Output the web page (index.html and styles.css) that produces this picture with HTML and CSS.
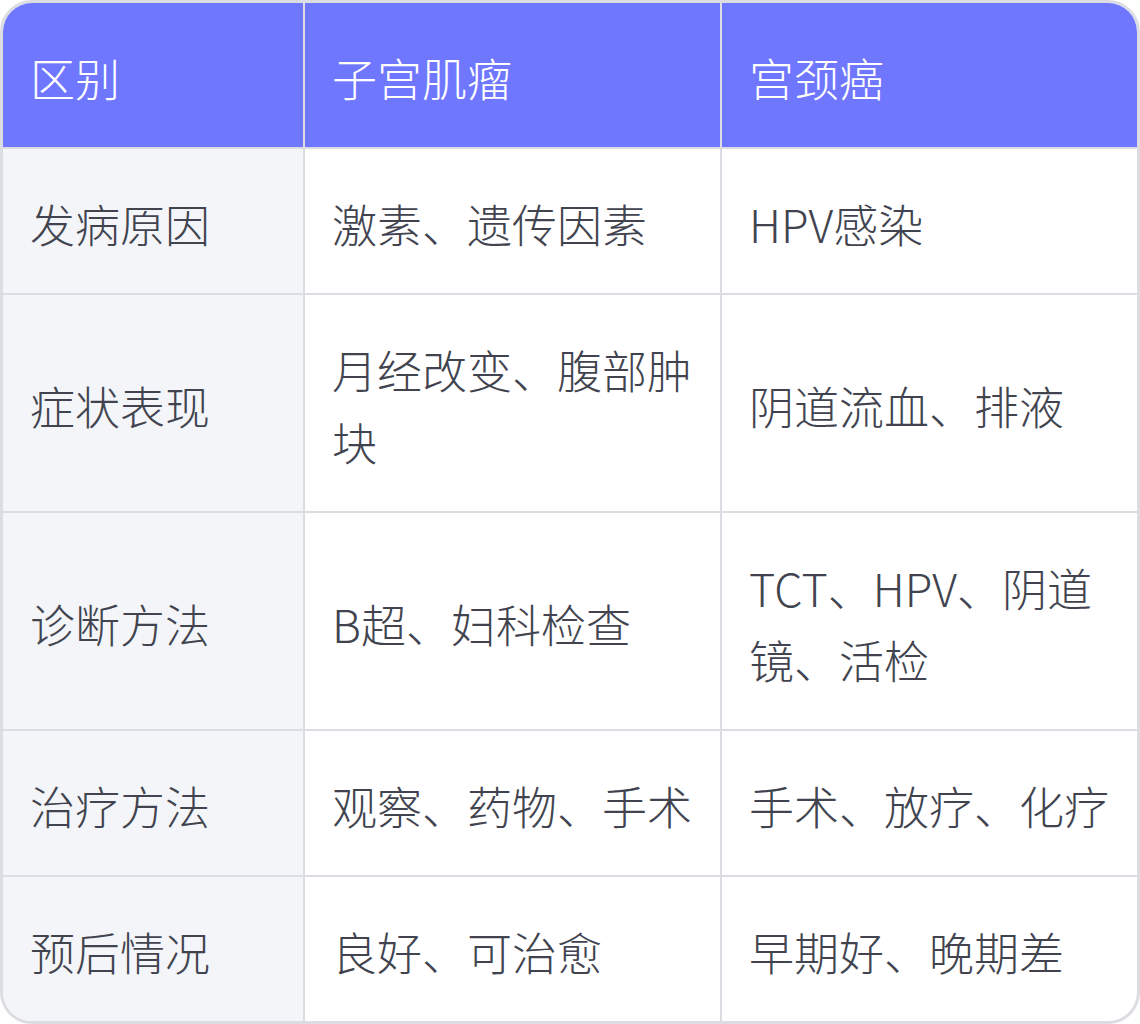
FILE: index.html
```html
<!DOCTYPE html>
<html lang="zh-CN">
<head>
<meta charset="utf-8">
<link rel="stylesheet" href="styles.css">
</head>
<body>
<div class="card">
  <table class="cmp">
    <colgroup>
      <col class="c1"><col class="c2"><col class="c3">
    </colgroup>
    <thead>
      <tr><th>区别</th><th>子宫肌瘤</th><th>宫颈癌</th></tr>
    </thead>
    <tbody>
      <tr><td class="lbl">发病原因</td><td>激素、遗传因素</td><td>HPV感染</td></tr>
      <tr><td class="lbl">症状表现</td><td>月经改变、腹部肿块</td><td>阴道流血、排液</td></tr>
      <tr><td class="lbl">诊断方法</td><td>B超、妇科检查</td><td>TCT、HPV、阴道镜、活检</td></tr>
      <tr><td class="lbl">治疗方法</td><td>观察、药物、手术</td><td>手术、放疗、化疗</td></tr>
      <tr><td class="lbl">预后情况</td><td>良好、可治愈</td><td>早期好、晚期差</td></tr>
    </tbody>
  </table>
</div>
</body>
</html>
```
FILE: styles.css
```css
html, body {
  margin: 0;
  padding: 0;
  background: #ffffff;
}
.card {
  width: 1140px;
  height: 1024px;
  box-sizing: border-box;
  border: 3px solid #dcdde2;
  border-radius: 32px;
  overflow: hidden;
  background: #ffffff;
}
.cmp {
  width: 1134px;
  border-collapse: separate;
  border-spacing: 0;
  table-layout: fixed;
  font-family: "Noto Sans CJK SC Light", "Noto Sans CJK SC DemiLight", "Noto Sans CJK SC", "Noto Sans", sans-serif;
  font-weight: 300;
  font-size: 45px;
  line-height: 72px;
  color: #41444f;
}
.c1 { width: 302px; }
.c2 { width: 417px; }
.c3 { width: 415px; }
.cmp th, .cmp td {
  padding: 39px 20px 33px 27px;
  text-align: left;
  vertical-align: middle;
  border-right: 2px solid #dcdde2;
  border-bottom: 2px solid #dcdde2;
  word-break: break-all;
}
.cmp th:last-child, .cmp td:last-child {
  border-right: none;
  padding-left: 27px;
}
.cmp tbody tr:last-child td {
  border-bottom: none;
}
.cmp th {
  background: #7077ff;
  color: #ffffff;
  font-weight: 300;
}
.cmp td.lbl {
  background: #f4f5f9;
}
.cmp th:first-child, .cmp td.lbl {
  padding-left: 27px;
}
```
